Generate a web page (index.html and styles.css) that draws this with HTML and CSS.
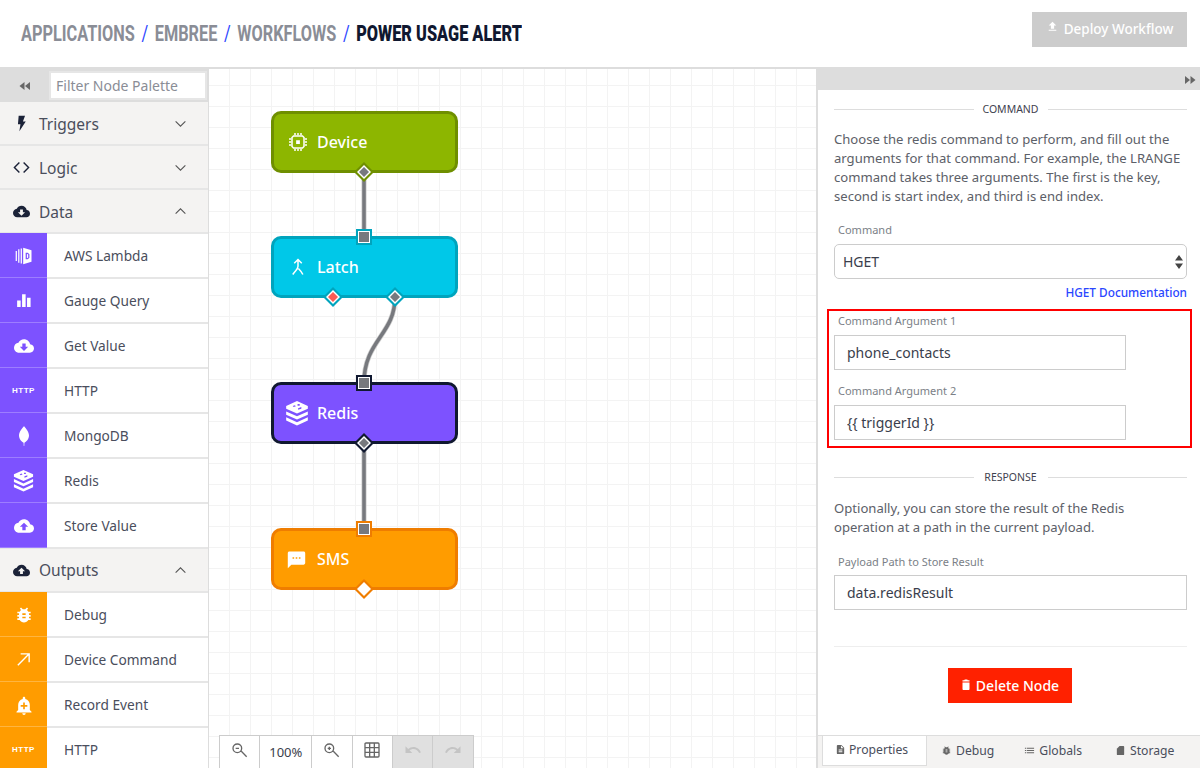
FILE: index.html

```html
<!doctype html>
<html>
<head>
    <meta charset="UTF-8">
    <title>Power Usage Alert</title>
    <link rel="stylesheet" href="styles.css">
</head>
<body>
<svg class="defs" width="0" height="0">
    <symbol id="i-bolt" viewBox="0 0 24 24"><path d="M8 1h9l-3 8h4L9 23l1.5-10H7z"/></symbol>
    <symbol id="i-down" viewBox="0 0 24 24"><path d="M19.35 10.04C18.67 6.59 15.64 4 12 4 9.11 4 6.6 5.64 5.35 8.04 2.34 8.36 0 10.91 0 14c0 3.31 2.69 6 6 6h13c2.76 0 5-2.24 5-5 0-2.64-2.05-4.78-4.65-4.96zM17 13l-5 5-5-5h3V9h4v4h3z"/></symbol>
    <symbol id="i-up" viewBox="0 0 24 24"><path d="M19.35 10.04C18.67 6.59 15.64 4 12 4 9.11 4 6.6 5.64 5.35 8.04 2.34 8.36 0 10.91 0 14c0 3.31 2.69 6 6 6h13c2.76 0 5-2.24 5-5 0-2.64-2.05-4.78-4.65-4.96zM14 13v4h-4v-4H7l5-5 5 5h-3z"/></symbol>
    <symbol id="i-lambda" viewBox="0 0 24 24"><path d="M2 6h1.500v12H2zM5 4h1.500v16H5zM8 3h1.500v18H8zM11 2l10 3v14l-10 3zM14 8v8h2.500l2-2v-4l-2-2zM15.500 9.500h.7l.8.8v3.400l-.8.8h-.7z" fill-rule="evenodd"/></symbol>
    <symbol id="i-bars" viewBox="0 0 24 24"><path d="M3 12h5v9H3zM10 3h5v18h-5zM17 8h5v13h-5z"/></symbol>
    <symbol id="i-leaf" viewBox="0 0 24 24"><path d="M12 0c1 2 6 6 6 11.500 0 4.500-3.500 7.500-5.500 8.500l-.2 4h-.6l-.2-4C9.500 19 6 16 6 11.500 6 6 11 2 12 0z"/></symbol>
    <symbol id="i-stack" viewBox="0 0 24 24"><path d="M12 1l10 4.500v2.500l-10 4.500L2 8V5.500zM2 10.500l10 4.500 10-4.500v3L12 18 2 13.500zM2 16l10 4.500L22 16v3l-10 4.500L2 19z"/><path class="cut" d="M8 5.500l2-.7 1 .9-2 .7zM12.500 3.800h2v1.500h-2zM13 7.500l3-1v1.500l-3 1z"/></symbol>
    <symbol id="i-bug" viewBox="0 0 24 24"><path d="M20 8h-2.810c-.45-.78-1.070-1.450-1.820-1.960L17 4.410 15.590 3l-2.170 2.170C12.960 5.060 12.490 5 12 5s-.96.06-1.410.17L8.410 3 7 4.410l1.620 1.630C7.880 6.550 7.260 7.220 6.810 8H4v2h2.090c-.05.33-.09.66-.09 1v1H4v2h2v1c0 .34.04.67.09 1H4v2h2.810c1.040 1.790 2.970 3 5.190 3s4.150-1.210 5.190-3H20v-2h-2.090c.05-.33.09-.66.09-1v-1h2v-2h-2v-1c0-.34-.04-.67-.09-1H20V8zm-6 8h-4v-2h4v2zm0-4h-4v-2h4v2z"/></symbol>
    <symbol id="i-arrow" viewBox="0 0 24 24"><path class="line" d="M4 20L19 5M8 4h12v12"/></symbol>
    <symbol id="i-bell" viewBox="0 0 24 24"><path d="M12 24c1.100 0 2-.9 2-2h-4c0 1.100.9 2 2 2zm7-6v-6c0-3.500-2-6.300-5.500-7.200V3.500C13.500 2.700 12.800 2 12 2s-1.500.7-1.500 1.500v1.300C7 5.700 5 8.500 5 12v6l-2 2v1h18v-1zM13 12h3v2h-3v3h-2v-3H8v-2h3V9h2z" fill-rule="evenodd"/></symbol>
    <symbol id="i-chip" viewBox="0 0 24 24"><path class="line" d="M6 4h12l2 2v12l-2 2H6l-2-2V6z"/><path d="M9.500 9.500h5v5h-5zM7 0h2v3H7zM11 0h2v3h-2zM15 0h2v3h-2zM7 21h2v3H7zM11 21h2v3h-2zM15 21h2v3h-2zM0 7h3v2H0zM0 11h3v2H0zM0 15h3v2H0zM21 7h3v2h-3zM21 11h3v2h-3zM21 15h3v2h-3z"/></symbol>
    <symbol id="i-merge" viewBox="0 0 24 24"><path class="line" d="M7 7l5-5 5 5M12 2v9c0 4-3 5-7 11M12.500 14c2 2 4 4 6 8"/></symbol>
    <symbol id="i-msg" viewBox="0 0 24 24"><path d="M21 2H3C1.900 2 1 2.900 1 4l0 19 4.500-4.500H21c1.100 0 2-.9 2-2V4c0-1.100-.9-2-2-2zM9 11H7V9h2v2zm4 0h-2V9h2v2zm4 0h-2V9h2v2z"/></symbol>
    <symbol id="i-trash" viewBox="0 0 24 24"><path d="M5 8h14v13c0 1.100-.9 2-2 2H7c-1.100 0-2-.9-2-2zM19 3.500h-3.500l-1-1.500h-5l-1 1.500H5V6h14z"/></symbol>
    <symbol id="i-doc" viewBox="0 0 24 24"><path d="M14 2H6c-1.100 0-1.990.9-1.990 2L4 20c0 1.100.89 2 1.990 2H18c1.100 0 2-.9 2-2V8l-6-6zm2 16H8v-2h8v2zm0-4H8v-2h8v2zm-3-5V3.500L18.500 9H13z"/></symbol>
    <symbol id="i-list" viewBox="0 0 24 24"><path d="M2 6h2.500v2H2zM6 6h16v2H6zM2 11h2.500v2H2zM6 11h16v2H6zM2 16h2.500v2H2zM6 16h16v2H6z"/></symbol>
    <symbol id="i-card" viewBox="0 0 24 24"><path d="M18 2h-8L4 8v12c0 1.100.9 2 2 2h12c1.100 0 2-.9 2-2V4c0-1.100-.9-2-2-2z"/></symbol>
    <symbol id="i-deploy" viewBox="0 0 24 24"><path d="M9 16h6v-6h4l-7-7-7 7h4v6zm-4 2h14v2H5v-2z"/></symbol>
    <symbol id="i-undo" viewBox="0 0 24 24"><path d="M12.500 8c-2.650 0-5.050.99-6.900 2.600L2 7v9h9l-3.620-3.620c1.390-1.160 3.160-1.880 5.120-1.880 3.540 0 6.550 2.310 7.600 5.500l2.370-.78C21.080 11.030 17.150 8 12.500 8z"/></symbol>
    <symbol id="i-redo" viewBox="0 0 24 24"><path d="M18.400 10.600C16.550 8.990 14.150 8 11.500 8c-4.650 0-8.580 3.030-9.960 7.220L3.900 16c1.050-3.190 4.050-5.500 7.600-5.500 1.950 0 3.730.72 5.120 1.880L13 16h9V7l-3.600 3.600z"/></symbol>
    <symbol id="i-zoomout" viewBox="0 0 24 24"><path class="line" d="M14.500 9.500a6.500 6.500 0 1 1-13 0a6.500 6.500 0 1 1 13 0zM14 14l8 8M5.500 9.500h5"/></symbol>
    <symbol id="i-zoomin" viewBox="0 0 24 24"><path class="line" d="M14.500 9.500a6.500 6.500 0 1 1-13 0a6.500 6.500 0 1 1 13 0zM14 14l8 8M5.500 9.500h5M8 7v5"/></symbol>
    <symbol id="i-grid" viewBox="0 0 24 24"><path class="line" d="M3 1.500h18a1.500 1.500 0 0 1 1.500 1.500v18a1.500 1.500 0 0 1-1.500 1.500H3A1.500 1.500 0 0 1 1.500 21V3A1.500 1.500 0 0 1 3 1.500zM8.500 1.500v21M15.500 1.500v21M1.500 8.500h21M1.500 15.500h21"/></symbol>
    <symbol id="i-code" viewBox="0 0 24 24"><path class="line" d="M9 5l-7 7 7 7M15 5l7 7-7 7"/></symbol>
    <symbol id="i-chev-d" viewBox="0 0 24 24"><path class="line" d="M3 8l9 9 9-9"/></symbol>
    <symbol id="i-chev-u" viewBox="0 0 24 24"><path class="line" d="M3 16l9-9 9 9"/></symbol>
    <symbol id="i-rew" viewBox="0 0 24 24"><path d="M11 4v16L1 12zM22 4v16L12 12z"/></symbol>
    <symbol id="i-fwd" viewBox="0 0 24 24"><path d="M2 4v16l10-8zM13 4v16l10-8z"/></symbol>
</svg>

<header class="top">
    <h1 class="crumbs">
        <span>Applications</span><i>/</i><span>Embree</span><i>/</i><span>Workflows</span><i>/</i><b>Power Usage Alert</b>
    </h1>
    <button class="deploy"><svg class="ico"><use href="#i-deploy"/></svg>Deploy Workflow</button>
</header>

<div class="main">
    <aside class="palette">
        <div class="filter">
            <div class="filter-btn"><svg class="ico"><use href="#i-rew"/></svg></div>
            <input class="filter-input" placeholder="Filter Node Palette">
        </div>

        <div class="group"><svg class="g-ico"><use href="#i-bolt"/></svg><span>Triggers</span><svg class="chev"><use href="#i-chev-d"/></svg></div>
        <div class="group"><svg class="g-ico"><use href="#i-code"/></svg><span>Logic</span><svg class="chev"><use href="#i-chev-d"/></svg></div>
        <div class="group"><svg class="g-ico"><use href="#i-down"/></svg><span>Data</span><svg class="chev"><use href="#i-chev-u"/></svg></div>

        <div class="item data"><div class="tile"><svg class="ico"><use href="#i-lambda"/></svg></div>AWS Lambda</div>
        <div class="item data"><div class="tile"><svg class="ico s-sm"><use href="#i-bars"/></svg></div>Gauge Query</div>
        <div class="item data"><div class="tile"><svg class="ico"><use href="#i-down"/></svg></div>Get Value</div>
        <div class="item data"><div class="tile"><span class="http">HTTP</span></div>HTTP</div>
        <div class="item data"><div class="tile"><svg class="ico"><use href="#i-leaf"/></svg></div>MongoDB</div>
        <div class="item data"><div class="tile"><svg class="ico s-lg"><use href="#i-stack"/></svg></div>Redis</div>
        <div class="item data"><div class="tile"><svg class="ico"><use href="#i-up"/></svg></div>Store Value</div>

        <div class="group g-out"><svg class="g-ico"><use href="#i-up"/></svg><span>Outputs</span><svg class="chev"><use href="#i-chev-u"/></svg></div>

        <div class="item output"><div class="tile"><svg class="ico"><use href="#i-bug"/></svg></div>Debug</div>
        <div class="item output"><div class="tile"><svg class="ico s-sm"><use href="#i-arrow"/></svg></div>Device Command</div>
        <div class="item output"><div class="tile"><svg class="ico"><use href="#i-bell"/></svg></div>Record Event</div>
        <div class="item output"><div class="tile"><span class="http">HTTP</span></div>HTTP</div>
    </aside>

    <section class="canvas">
        <div class="node n-device"><svg class="n-ico"><use href="#i-chip"/></svg>Device</div>
        <div class="node n-latch"><svg class="n-ico"><use href="#i-merge"/></svg>Latch</div>
        <div class="node n-redis"><svg class="n-ico big"><use href="#i-stack"/></svg>Redis</div>
        <div class="node n-sms"><svg class="n-ico mid"><use href="#i-msg"/></svg>SMS</div>

        <!-- wires and ports, in page coordinates -->
        <svg class="wires" viewBox="209 69 607 699">
            <g class="wire-edge">
                <path d="M364 172V236"/>
                <path d="M395 297C395 335 364 340 364 383"/>
                <path d="M364 443V529"/>
            </g>
            <g class="wire">
                <path d="M364 172V236"/>
                <path d="M395 297C395 335 364 340 364 383"/>
                <path d="M364 443V529"/>
            </g>

            <path fill="#6f8f00" d="M364 162l10 10-10 10-10-10z"/>
            <path fill="#fff" d="M364 165l7 7-7 7-7-7z"/>
            <path fill="#77797e" d="M364 167l5 5-5 5-5-5z"/>

            <rect x="356" y="229" width="16" height="16" fill="#00a4bd"/>
            <rect x="358" y="231" width="12" height="12" fill="#fff"/>
            <rect x="359" y="232" width="10" height="10" fill="#77797e"/>

            <path fill="#00a4bd" d="M333 287l10 10-10 10-10-10z"/>
            <path fill="#fff" d="M333 290l7 7-7 7-7-7z"/>
            <path fill="#fb5a54" d="M333 292l5 5-5 5-5-5z"/>

            <path fill="#00a4bd" d="M395 287l10 10-10 10-10-10z"/>
            <path fill="#fff" d="M395 290l7 7-7 7-7-7z"/>
            <path fill="#77797e" d="M395 292l5 5-5 5-5-5z"/>

            <rect x="356" y="375" width="16" height="16" fill="#101830"/>
            <rect x="358" y="377" width="12" height="12" fill="#fff"/>
            <rect x="359" y="378" width="10" height="10" fill="#77797e"/>

            <path fill="#101830" d="M364 433l10 10-10 10-10-10z"/>
            <path fill="#fff" d="M364 436l7 7-7 7-7-7z"/>
            <path fill="#77797e" d="M364 438l5 5-5 5-5-5z"/>

            <rect x="356" y="521" width="16" height="16" fill="#ef7d00"/>
            <rect x="358" y="523" width="12" height="12" fill="#fff"/>
            <rect x="359" y="524" width="10" height="10" fill="#77797e"/>

            <path fill="#ef7d00" d="M364 579l10 10-10 10-10-10z"/>
            <path fill="#fff" d="M364 582l7 7-7 7-7-7z"/>
        </svg>

        <div class="tools">
            <div class="tool"><svg class="ico"><use href="#i-zoomout"/></svg></div>
            <div class="tool pct">100%</div>
            <div class="tool"><svg class="ico"><use href="#i-zoomin"/></svg></div>
            <div class="tool"><svg class="ico"><use href="#i-grid"/></svg></div>
            <div class="tool off"><svg class="ico"><use href="#i-undo"/></svg></div>
            <div class="tool off"><svg class="ico"><use href="#i-redo"/></svg></div>
        </div>
    </section>

    <aside class="panel">
        <div class="panel-bar"><svg class="ico"><use href="#i-fwd"/></svg></div>
        <div class="panel-body">
            <div class="rule-title"><span>Command</span></div>
            <p class="copy first">Choose the redis command to perform, and fill out the arguments for that command. For example, the LRANGE command takes three arguments. The first is the key, second is start index, and third is end index.</p>

            <label class="lbl lbl-cmd">Command</label>
            <div class="select-wrap">
                <select class="select"><option>HGET</option></select>
                <svg class="updown" viewBox="0 0 8 14"><path d="M4 0l4 5.500H0zM4 14L0 8.500h8z"/></svg>
            </div>
            <div class="doc-link"><a href="#">HGET Documentation</a></div>

            <div class="red-box">
                <label class="lbl">Command Argument 1</label>
                <input class="txt short" value="phone_contacts">
                <label class="lbl lbl-2">Command Argument 2</label>
                <input class="txt short" value="{{ triggerId }}">
            </div>

            <div class="rule-title resp"><span>Response</span></div>
            <p class="copy second">Optionally, you can store the result of the Redis operation at a path in the current payload.</p>

            <label class="lbl lbl-path">Payload Path to Store Result</label>
            <input class="txt plain" value="data.redisResult">

            <hr class="sep">
            <div class="del-row"><button class="del"><svg class="ico"><use href="#i-trash"/></svg>Delete Node</button></div>
        </div>
        <nav class="tabs">
            <div class="tab on"><svg class="ico"><use href="#i-doc"/></svg>Properties</div>
            <div class="tab"><svg class="ico"><use href="#i-bug"/></svg>Debug</div>
            <div class="tab"><svg class="ico"><use href="#i-list"/></svg>Globals</div>
            <div class="tab"><svg class="ico"><use href="#i-card"/></svg>Storage</div>
        </nav>
    </aside>
</div>
</body>
</html>
```

FILE: styles.css

```css
*{box-sizing:border-box}
html,body{margin:0;height:100%;overflow:hidden}
body{font-family:"Noto Sans","Liberation Sans",sans-serif;color:#4a4e5c;background:#fff;font-size:14px}
.defs{position:absolute}
.ico{width:16px;height:16px;fill:currentColor;display:block}
.line{fill:none;stroke:currentColor;stroke-width:2}
.cut{fill:#7d52ff}

/* header */
.top{height:69px;border-bottom:2px solid #ddd;display:flex;align-items:flex-start;justify-content:space-between;padding:12px 13px 0 21px}
.crumbs{margin:9px 0 0;font-family:Roboto,sans-serif;font-size:22.500px;line-height:24px;font-weight:700;text-transform:uppercase;color:#8a8d96;white-space:nowrap;transform:scaleX(.725);transform-origin:left center}
.crumbs i{font-style:normal;color:#2a46ff;margin:0 9px;font-weight:400}
.crumbs b{color:#101830}
.deploy{width:155px;height:35px;flex:none;border:0;padding:0 0 2px;background:#ccc;color:#fff;font:500 13.500px "Noto Sans",sans-serif;display:flex;align-items:center;justify-content:center;gap:5px}
.deploy .ico{width:13px;height:13px;margin-bottom:4px}

.main{display:flex;height:699px}

/* node palette */
.palette{width:209px;flex:none;border-right:1px solid #ddd;overflow:hidden}
.filter{height:33px;display:flex;background:#ddd;padding:2px 1px 2px 0}
.filter-btn{width:49px;flex:none;display:flex;align-items:center;justify-content:center;color:#666}
.filter-btn .ico{width:12px;height:12px}
.filter-input{flex:1;min-width:0;border:2px solid #e6e6e6;font:14px "Noto Sans",sans-serif;padding:0 5px;color:#555;outline:0}
.filter-input::placeholder{color:#8a8d96}
.group{height:44px;padding:1px 21px 0 13px;background:#f4f3f2;border-bottom:2px solid #e6e6e6;display:flex;align-items:center;font-size:15.500px;color:#4a4e5c}
.g-out{padding-top:0}
.group span{flex:1;margin-left:9px}
.g-ico{width:17px;height:17px;fill:#1b2238;color:#1b2238}
.chev{width:13px;height:13px;fill:none;color:#555}
.item{height:45px;display:flex;align-items:center;background:#fff;border-bottom:2px solid #e6e6e6;font-size:13.700px}
.tile{width:47px;height:45px;margin-right:17px;color:#fff;display:flex;align-items:center;justify-content:center;flex:none;box-shadow:inset 0 -1px rgba(255,255,255,.25)}
.tile .ico{width:20px;height:20px}
.tile .s-sm{width:17px;height:17px}
.tile .s-lg{width:23px;height:23px}
.data .tile{background:#7d52ff}
.output .tile{background:#ff9c00}
.http{font:700 8px "Liberation Sans",sans-serif;letter-spacing:.5px}

/* canvas */
.canvas{flex:1;position:relative;overflow:hidden;
    background-color:#fff;
    background-image:linear-gradient(to right,#f3f3f3 1px,transparent 1px),linear-gradient(to bottom,#f3f3f3 1px,transparent 1px);
    background-size:21px 21px;
    background-position:20px 16px}
.node{position:absolute;left:62px;width:187px;height:62px;border:3px solid;border-radius:10px;color:#fff;font-size:16px;font-weight:500;display:flex;align-items:center;padding-left:15px}
.n-ico{width:18px;height:18px;margin-right:10px;fill:#fff;color:#fff}
.n-ico.big{width:26px;height:26px;margin-left:-5px;margin-right:7px}
.n-ico.mid{width:19px;height:19px;margin-left:-2px;margin-right:11px}
.n-device{top:42px;background:#8db600;border-color:#6f8f00}
.n-latch{top:167px;background:#00c8e8;border-color:#00a4bd}
.n-redis{top:313px;background:#7d52ff;border-color:#101830}
.n-sms{top:459px;background:#ff9c00;border-color:#ef7d00}
.wires{position:absolute;left:0;top:0;width:607px;height:699px;pointer-events:none}
.wires .wire,.wires .wire-edge{fill:none}
.wire path{stroke:#77797e;stroke-width:3.500}
.wire-edge path{stroke:#c9c9c9;stroke-width:5}
.tools{position:absolute;left:10px;bottom:0;height:33px;display:flex;background:#fff;border:solid #ccc;border-width:1px 1px 0 1px}
.tool{width:40.300px;display:flex;align-items:center;justify-content:center;border-right:1px solid #ccc;color:#666}
.tool:last-child{border-right:0}
.tool .ico{margin-bottom:5px}
.tool.pct{width:52px;font-size:13px;color:#3a3e4c}
.off{background:#e0e0e0;color:#c4c4c4}
.tool.off .ico{width:18px;height:18px}

/* properties panel */
.panel{width:384px;flex:none;border-left:2px solid #ddd;display:flex;flex-direction:column;position:relative}
.panel-bar{height:21px;background:#ddd;display:flex;align-items:center;justify-content:flex-end;padding-right:4px;color:#666}
.panel-bar .ico{width:12px;height:12px}
.panel-body{flex:1;padding:0 13px 0 16px}
.rule-title{display:flex;align-items:center;justify-content:center;font-size:10.500px;text-transform:uppercase;height:18px;margin-top:10px;color:#3f4350}
.rule-title:before,.rule-title:after{content:"";flex:1;height:1px;background:#ddd}
.rule-title span{width:74px;text-align:center}
.rule-title.resp{margin-top:20px}
.copy{margin:0;font-size:13.100px;line-height:19px;color:#5c6068}
.copy.first{margin-top:12px}
.copy.second{margin-top:13px}
.lbl{display:block;font-size:11px;line-height:16px;color:#7b7f87;padding-left:4px}
.lbl-cmd{margin-top:16px;margin-bottom:6px}
.select-wrap{position:relative;height:35px}
.select{appearance:none;width:100%;height:35px;border:1px solid #ccc;border-radius:5px;background:#fff;font:14px "Noto Sans",sans-serif;color:#3a3e4c;padding:0 8px;outline:0}
.updown{position:absolute;right:4px;top:11px;width:8px;height:14px;fill:#444}
.doc-link{text-align:right;font-size:11.800px;font-weight:500;line-height:18px;margin-top:4px}
.doc-link a{color:#2a46ff;text-decoration:none}
.red-box{margin:8px -5px 0 -7px;height:139px;border:2px solid #f00;padding:2px 5px 0 5px}
.red-box .lbl{margin-bottom:6px}
.red-box .lbl-2{margin-top:13px}
.txt{display:block;height:35px;border:1px solid #ccc;font:14px "Noto Sans",sans-serif;color:#3a3e4c;padding:0 12px;outline:0;background:#fff}
.short{width:292px}
.plain{width:100%}
.lbl-path{margin-top:17px;margin-bottom:5px}
.sep{margin:36px 0 0;border:0;height:1px;background:#eee}
.del-row{display:flex;justify-content:center;margin-top:21px;margin-right:2px}
.del{width:124px;height:35px;background:#ff2100;color:#fff;border:0;font:500 14px "Noto Sans",sans-serif;display:flex;align-items:center;justify-content:center;gap:4px}
.del .ico{width:12px;height:13px;margin-bottom:3px}
.tabs{height:33px;background:#f4f3f2;border-top:1px solid #ddd;display:flex;padding:0 0 4px 4px}
.tab{display:flex;align-items:center;gap:4px;font-size:12.200px;color:#4a4e5c;margin-left:30px}
.tab .ico{width:11px;height:11px;color:#666}
.tab.on{background:#fff;width:105px;margin:-1px 0 -2px;padding:0 0 2px 12px;border:1px solid #ddd;border-top-color:#ddd;gap:3px}
.tab.on + .tab{margin-left:14px}
.tab:last-child{margin-left:33px}
```
